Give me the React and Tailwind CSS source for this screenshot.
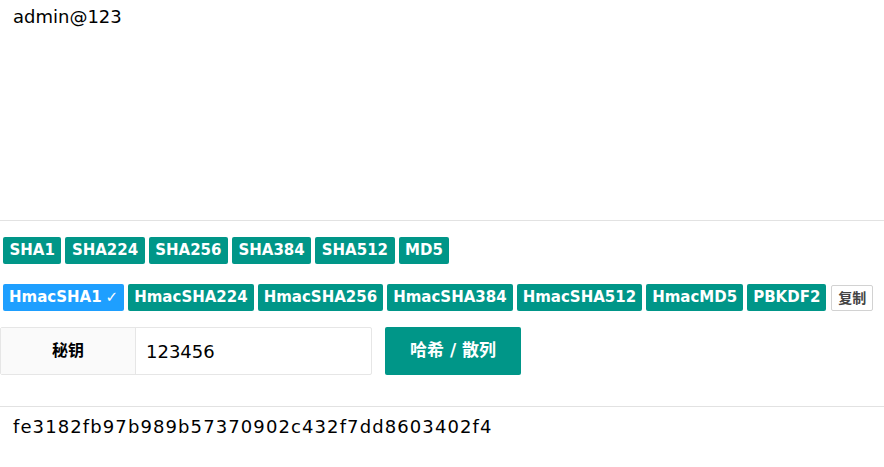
import React from "react";

const font = { fontFamily: '"DejaVu Sans", "Noto Sans CJK SC", sans-serif' };

function Tag({ children, active, wide }) {
  return (
    <span
      className={`inline-flex h-[27px] items-center rounded-[2px] text-[15px] font-bold leading-none text-white ${
        wide ? "px-[6.5px]" : "px-[6px]"
      } ${active ? "bg-[#1E9FFF]" : "bg-[#009688]"}`}
    >
      {children}
    </span>
  );
}

export default function App() {
  const row1 = ["SHA1", "SHA224", "SHA256", "SHA384", "SHA512", "MD5"];
  const row2 = ["HmacSHA224", "HmacSHA256", "HmacSHA384", "HmacSHA512", "HmacMD5", "PBKDF2"];
  return (
    <div className="w-[884px] h-[467px] bg-white text-black" style={font}>
      <div className="h-[221px] border-b border-[#e2e2e2] px-[13px] pt-[6px] text-[18px] leading-[21px]">
        admin@123
      </div>
      <div className="flex gap-[4px] px-[3px] pt-[16px]">
        {row1.map((t) => (
          <Tag key={t} wide>
            {t}
          </Tag>
        ))}
      </div>
      <div className="flex items-center gap-[4px] px-[3px] pt-[20px]">
        <Tag active>
          HmacSHA1<span className="ml-[4px]">✓</span>
        </Tag>
        {row2.map((t) => (
          <Tag key={t}>{t}</Tag>
        ))}
        <span className="ml-[1px] inline-flex h-[26px] items-center rounded-[2px] border border-[#d2d2d2] bg-white px-[6px] text-[14px] font-bold leading-none text-[#444]">
          复制
        </span>
      </div>
      <div className="flex items-center pt-[16px]">
        <div className="flex h-[48px] w-[372px] rounded-[2px] border border-[#e6e6e6]">
          <div className="flex w-[135px] items-center justify-center border-r border-[#e6e6e6] bg-[#fafafa] text-[16px] font-bold">
            秘钥
          </div>
          <div className="flex flex-1 items-center pl-[10px] text-[18px]">123456</div>
        </div>
        <button className="ml-[13px] flex h-[48px] w-[136px] items-center justify-center rounded-[2px] bg-[#009688] text-[17px] font-bold text-white">
          哈希 / 散列
        </button>
      </div>
      <div className="mt-[31px] border-t border-[#e2e2e2] px-[13px] pt-[9px] text-[18px] leading-[21px] tracking-[1.1px]">
        fe3182fb97b989b57370902c432f7dd8603402f4
      </div>
    </div>
  );
}
